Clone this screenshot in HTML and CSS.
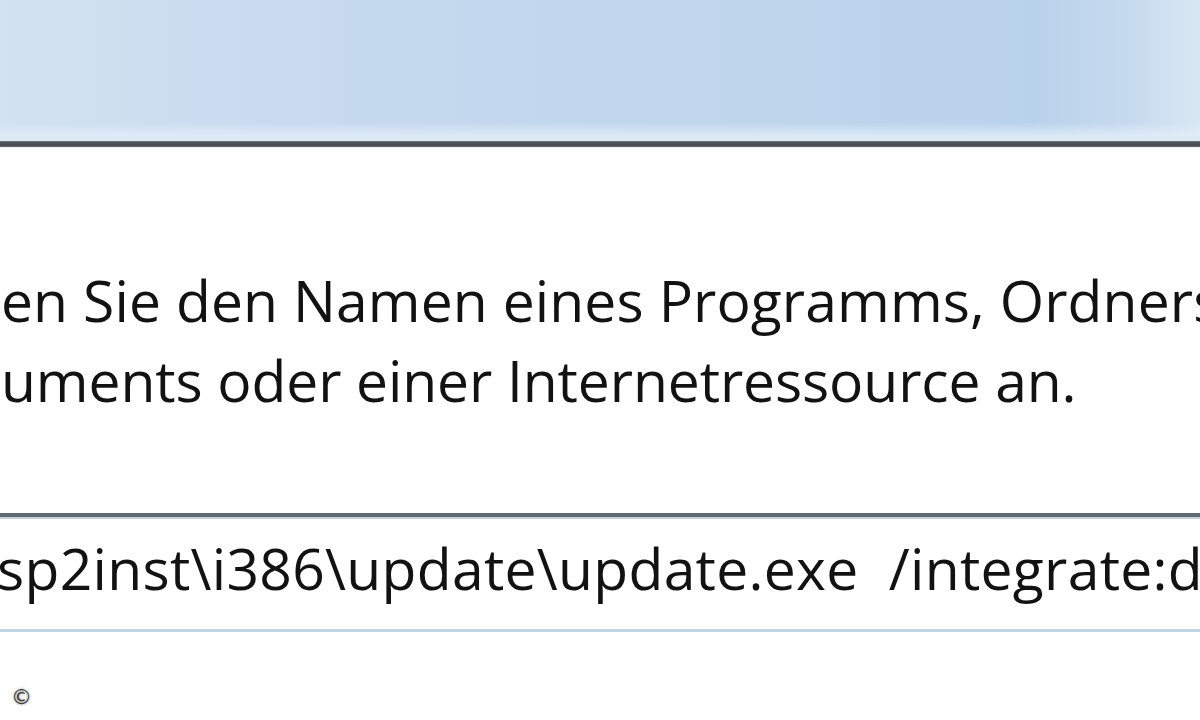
FILE: index.html
```html
<!DOCTYPE html>
<html lang="de">
<head>
<meta charset="utf-8">
<title>Ausführen</title>
<link rel="stylesheet" href="styles.css">
</head>
<body>
<div class="window">
  <div class="titlebar"></div>
  <div class="divider"></div>
  <div class="content">
    <p class="prompt">
      <span class="line">en Sie den Namen eines Programms, Ordners,</span>
      <span class="line">uments oder einer Internetressource an.</span>
    </p>
    <div class="field">
      <span class="field-text">sp2inst\i386\update\update.exe&nbsp; /integrate:d:\xpsp2</span>
    </div>
  </div>
  <div class="copyright">©</div>
</div>
</body>
</html>
```

FILE: styles.css
```css
html, body {
  margin: 0;
  padding: 0;
  background: #ffffff;
}

.window {
  width: 1200px;
  height: 720px;
  overflow: hidden;
  display: flex;
  flex-direction: column;
  font-family: "Open Sans", "Noto Sans", "DejaVu Sans", sans-serif;
  color: #121212;
}

.titlebar {
  height: 136px;
  flex: none;
  background:
    linear-gradient(to bottom, rgba(255,255,255,0) 0%, rgba(255,255,255,0) 90%, rgba(228,238,249,0.8) 100%),
    linear-gradient(to right, #d2e2f1 0%, #cadcef 18%, #c3d8ee 40%, #bfd5ec 65%, #b9d2eb 86%, #c6daee 94%, #d9e7f4 100%);
}

.divider {
  height: 13px;
  flex: none;
  background: linear-gradient(to bottom,
    #dde9f5 0px, #dde9f5 5px,
    #8a8e92 5px, #505458 6px, #4a4e52 10px, #7c8084 11px,
    #e6e8ea 11px, #ffffff 13px);
}

.content {
  flex: none;
  display: flex;
  flex-direction: column;
}

.prompt {
  margin: 111px 0 0 0;
  font-size: 57px;
  line-height: 80px;
  white-space: nowrap;
  letter-spacing: 0.1px;
}

.line {
  display: block;
  padding-left: 1px;
}

.line + .line {
  letter-spacing: -0.1px;
}

.field {
  margin-top: 93px;
  height: 112px;
  border-top: 4px solid #5e6b75;
  border-bottom: 3px solid #c4d5e4;
  box-shadow: inset 0 2px 0 #c9d0d6;
  background: #ffffff;
  display: flex;
  align-items: flex-start;
  white-space: nowrap;
  overflow: hidden;
  font-size: 57px;
  letter-spacing: 0.3px;
}

.field-text {
  margin-left: -3px;
  padding-top: 12px;
}

.copyright {
  margin: 55px 0 0 11px;
  width: 20px;
  height: 20px;
  font-family: "DejaVu Sans", sans-serif;
  font-size: 21px;
  line-height: 20px;
  color: #3a3a3a;
  text-shadow: 0 0 3px rgba(0,0,0,0.5);
}
```
